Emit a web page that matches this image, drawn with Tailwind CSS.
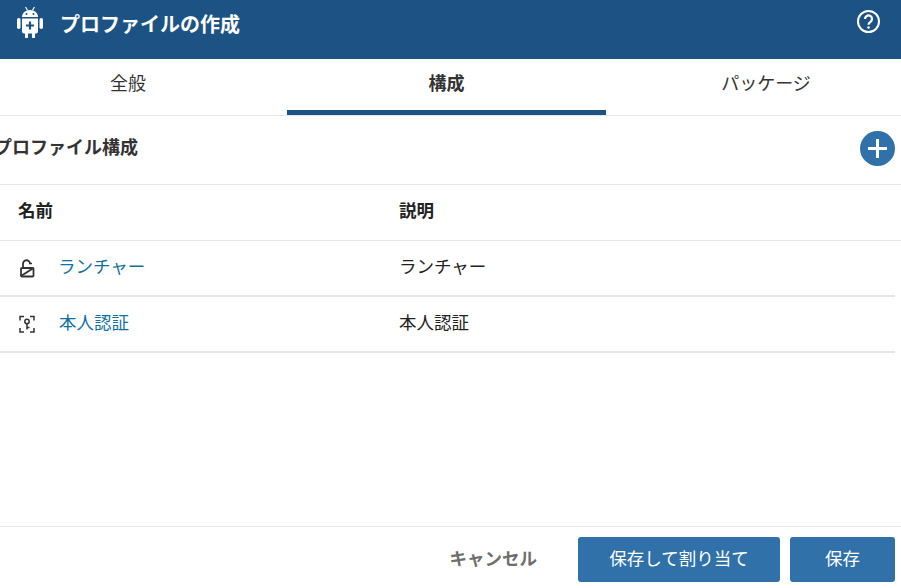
<!DOCTYPE html>
<html lang="ja">
<head>
    <meta charset="UTF-8">
    <meta name="viewport" content="width=device-width, initial-scale=1.0">
    <title>プロファイルの作成</title>
    <script src="https://cdn.jsdelivr.net/npm/@tailwindcss/browser@4"></script>
</head>
<body class="bg-white font-['Liberation_Sans','Noto_Sans_CJK_JP',sans-serif] text-[#333] overflow-hidden">
    <div class="flex flex-col h-[588px] w-[901px]">
        <!-- Header -->
        <header class="flex h-[59px] shrink-0 justify-between bg-[#1d5384] pl-[16px] pr-[21px] text-white">
            <div class="flex h-[44px] items-center gap-[16px]">
                <svg class="w-[28px] h-[32px]" viewBox="0 0 28 32" fill="#fff">
                    <path d="M9.500 1l2 3.200M18.500 1l-2 3.200" stroke="#fff" stroke-width="1.200" fill="none"/>
                    <path d="M6 11c0-4 3.500-7 8-7s8 3 8 7z"/>
                    <path d="M6 12.500h16v13a2 2 0 0 1-2 2h-1v3.500a1.500 1.500 0 0 1-3 0v-3.500h-4v3.500a1.500 1.500 0 0 1-3 0v-3.500H8a2 2 0 0 1-2-2z"/>
                    <rect x="1" y="12" width="3.500" height="11" rx="1.750"/>
                    <rect x="23.500" y="12" width="3.500" height="11" rx="1.750"/>
                    <circle cx="10.500" cy="8" r="1" fill="#1d5384"/>
                    <circle cx="17.500" cy="8" r="1" fill="#1d5384"/>
                    <path d="M14 15.500v8M10 19.500h8" stroke="#1d5384" stroke-width="2.200"/>
                </svg>
                <h1 class="mt-[6px] text-[20px] font-bold">プロファイルの作成</h1>
            </div>
            <svg class="mt-[10px] w-[23px] h-[23px]" viewBox="0 0 23 23" fill="none" stroke="#fff" stroke-width="2">
                <circle cx="11.500" cy="11.500" r="10.500"/>
                <path d="M8 9a3.500 3.500 0 1 1 5.500 2.800c-1.300.9-2 1.500-2 3" stroke-width="2.200"/>
                <circle cx="11.500" cy="17.500" r="1.300" fill="#fff" stroke="none"/>
            </svg>
        </header>

        <!-- Tabs -->
        <nav class="grid grid-cols-[287px_319px_1fr] h-[57px] shrink-0 border-b border-[#e6e6e6] text-[18px] text-center">
            <div class="flex items-center justify-center pb-[5px]"><span class="mr-[31px]">全般</span></div>
            <div class="flex items-center justify-center border-b-[5px] border-[#1d5384] font-bold">構成</div>
            <div class="flex items-center justify-center pb-[5px]"><span class="ml-[25px]">パッケージ</span></div>
        </nav>

        <!-- Section title -->
        <div class="flex h-[69px] shrink-0 items-start justify-between border-b border-[#e6e6e6] pr-[6px]">
            <h2 class="mt-[19px] ml-[-6px] text-[18px] font-bold">プロファイル構成</h2>
            <button class="mt-[15px] flex h-[35px] w-[35px] items-center justify-center rounded-full bg-[#2f71a8]">
                <svg class="w-[21px] h-[21px]" viewBox="0 0 21 21" stroke="#fff" stroke-width="3"><path d="M10.500 1v19M1 10.500h19"/></svg>
            </button>
        </div>

        <!-- Table -->
        <div class="grid grid-cols-[381px_1fr] h-[56px] shrink-0 items-center border-b border-[#e6e6e6] pl-[18px] text-[17.500px] font-bold text-[#222]">
            <div class="mt-[-3px]">名前</div>
            <div class="mt-[-3px]">説明</div>
        </div>
        <div class="mr-[6px] grid grid-cols-[381px_1fr] h-[56px] shrink-0 items-center border-b-2 border-[#e6e6e6] pl-[18px] text-[17.500px]">
            <div class="flex items-center gap-[23px] text-[#0f72a3]">
                <svg class="w-[18px] h-[20px] text-[#333]" viewBox="0 0 18 20" fill="none" stroke="currentColor" stroke-width="1.800">
                    <path d="M5 9.500V6a3.500 3.500 0 0 1 7-.5"/>
                    <path d="M11 5.500h3" stroke-width="1.500"/>
                    <rect x="3" y="10" width="12.500" height="8.500" rx="1"/>
                    <path d="M3 18l12.500-8"/>
                </svg>
                <a class="mt-[-2px] ml-[-1px]">ランチャー</a>
            </div>
            <div class="mt-[-2px] text-[#222]">ランチャー</div>
        </div>
        <div class="mr-[6px] grid grid-cols-[381px_1fr] h-[56px] shrink-0 items-center border-b-2 border-[#e6e6e6] pl-[18px] text-[17.500px]">
            <div class="flex items-center gap-[23px] text-[#0f72a3]">
                <svg class="w-[18px] h-[20px] text-[#333]" viewBox="0 0 18 20" fill="none" stroke="currentColor" stroke-width="1.500">
                    <path d="M2 6.500V2.500h4M12 2.500h4v4M2 14v4h4M16 14v4h-4"/>
                    <circle cx="9" cy="7.500" r="2.200"/>
                    <path d="M9 9.700v5.800M9 13.500h2.500"/>
                </svg>
                <a class="mt-[-2px]">本人認証</a>
            </div>
            <div class="mt-[-2px] text-[#222]">本人認証</div>
        </div>

        <div class="flex-1"></div>

        <!-- Footer -->
        <footer class="flex h-[62px] shrink-0 items-start justify-end border-t border-[#e6e6e6] pt-[10px] pr-[6px]">
            <button class="mr-[41px] h-[45px] text-[17.500px] font-bold text-[#6e6e6e]">キャンセル</button>
            <button class="h-[45px] w-[202px] rounded-[3px] bg-[#2f71a8] text-[17.500px] text-white">保存して割り当て</button>
            <button class="ml-[10px] h-[45px] w-[105px] rounded-[3px] bg-[#2f71a8] text-[17.500px] text-white">保存</button>
        </footer>
    </div>
</body>
</html>
